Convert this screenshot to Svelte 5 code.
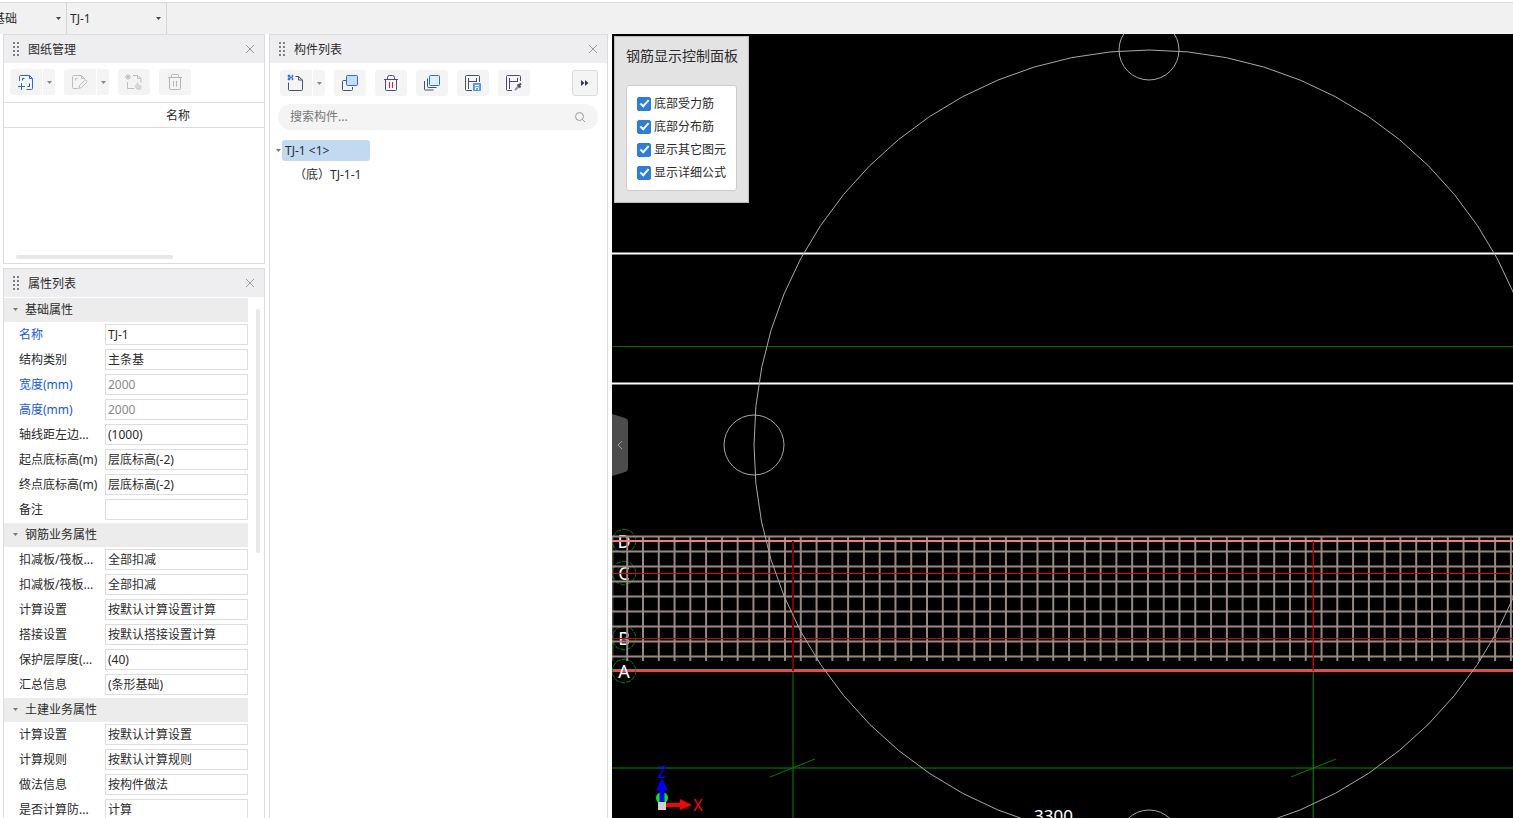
<script lang="ts">
  interface Prop {
    label: string;
    value: string;
    key?: boolean;
    readonly?: boolean;
  }

  interface Group {
    title: string;
    rows: Prop[];
  }

  const groups: Group[] = [
    {
      title: '基础属性',
      rows: [
        { label: '名称', value: 'TJ-1', key: true },
        { label: '结构类别', value: '主条基' },
        { label: '宽度(mm)', value: '2000', key: true, readonly: true },
        { label: '高度(mm)', value: '2000', key: true, readonly: true },
        { label: '轴线距左边...', value: '(1000)' },
        { label: '起点底标高(m)', value: '层底标高(-2)' },
        { label: '终点底标高(m)', value: '层底标高(-2)' },
        { label: '备注', value: '' },
      ],
    },
    {
      title: '钢筋业务属性',
      rows: [
        { label: '扣减板/筏板...', value: '全部扣减' },
        { label: '扣减板/筏板...', value: '全部扣减' },
        { label: '计算设置', value: '按默认计算设置计算' },
        { label: '搭接设置', value: '按默认搭接设置计算' },
        { label: '保护层厚度(...', value: '(40)' },
        { label: '汇总信息', value: '(条形基础)' },
      ],
    },
    {
      title: '土建业务属性',
      rows: [
        { label: '计算设置', value: '按默认计算设置' },
        { label: '计算规则', value: '按默认计算规则' },
        { label: '做法信息', value: '按构件做法' },
        { label: '是否计算防...', value: '计算' },
      ],
    },
  ];

  let layers = $state([
    { label: '底部受力筋', on: true },
    { label: '底部分布筋', on: true },
    { label: '显示其它图元', on: true },
    { label: '显示详细公式', on: true },
  ]);

  let keyword = $state('');

  function polygon(cx: number, cy: number, r: number, n: number) {
    return Array.from({ length: n }, (_, i) => {
      const a = (i / n) * Math.PI * 2;
      return `${(cx + r * Math.sin(a)).toFixed(1)},${(cy - r * Math.cos(a)).toFixed(1)}`;
    }).join(' ');
  }

  // Rebar mesh, in canvas coordinates
  const meshX = Array.from({ length: 160 }, (_, i) => (15.2 + i * 15.78).toFixed(2));
  const meshY = Array.from({ length: 9 }, (_, i) => 502.5 + i * 15);

  const orbit = polygon(537, 411, 395, 64);
  const knobs = [[537, 16], [142, 411], [932, 411], [537, 806]];
  const axes = [
    { name: 'D', y: 507 },
    { name: 'C', y: 539 },
    { name: 'B', y: 604 },
    { name: 'A', y: 637 },
  ];
</script>

{#snippet panelHead(title: string)}
  <header class="panel-head">
    <svg class="grip" width="8" height="14" viewBox="0 0 8 14" aria-hidden="true">
      {#each [0, 4, 8, 12] as y}
        <path d="M1 {y}h2v2h-2zM5 {y}h2v2h-2z" />
      {/each}
    </svg>
    <h2>{title}</h2>
    <button class="close" aria-label="关闭{title}">
      <svg width="10" height="10" viewBox="0 0 10 10"><path d="M1 1l8 8M9 1l-8 8" /></svg>
    </button>
  </header>
{/snippet}

{#snippet arrow()}
  <svg class="arrow" width="5" height="3" viewBox="0 0 5 3" aria-hidden="true"><path d="M0 0h5l-2.5 3z" /></svg>
{/snippet}

<div class="app">
  <nav class="topbar">
    <label class="pick first">
      <select aria-label="构件类型"><option>基础</option></select>
      {@render arrow()}
    </label>
    <label class="pick">
      <select aria-label="构件名称"><option>TJ-1</option></select>
      {@render arrow()}
    </label>
  </nav>

  <div class="workspace">
    <div class="side">
      <section class="panel drawings">
        {@render panelHead('图纸管理')}
        <div class="tools">
          <div class="split">
            <button class="tool" aria-label="添加图纸">
              <svg width="18" height="18" viewBox="0 0 18 18" stroke="#1f6fe0">
                <path d="M2.5 8V3.500q0-1 1-1h9l3 3v10q0 1-1 1H9.500M12.500 2.500v3h3M1 13.500h7M4.500 10v7" />
                <path d="M5.500 7.500v-2h2M12.500 10.500v3h-2" stroke="#46506a" />
              </svg>
            </button>
            <button class="drop" aria-label="添加图纸选项">{@render arrow()}</button>
          </div>
          <div class="split">
            <button class="tool" aria-label="编辑图纸">
              <svg width="18" height="18" viewBox="0 0 18 18" stroke="#bdbdbd">
                <path d="M7 15.500H2.500q-1 0-1-1v-11q0-1 1-1h8l3 3v1M10.500 2.500v3h3M4.500 7.500v-2h2" />
                <path d="M8 15.500l.5-3 5-5q1-1 2 0t0 2l-5 5z" />
              </svg>
            </button>
            <button class="drop" aria-label="编辑图纸选项">{@render arrow()}</button>
          </div>
          <button class="tool" aria-label="提取图纸">
            <svg width="18" height="18" viewBox="0 0 18 18" stroke="#bdbdbd">
              <path d="M1 2l4 4M5 2L1 6M3 1v6M0 4h6M2.500 9v6.500h7M8 2.500h5l3 3v4M12.500 2.500v3h3" />
              <path d="M12 16l-2-3 1-.5 1 .5V10h1v2l3 1v2l-1 1.500z" fill="#d8d8d8" stroke="#d0d0d0" />
            </svg>
          </button>
          <button class="tool" aria-label="删除图纸">
            <svg width="18" height="18" viewBox="0 0 18 18" stroke="#b4b4b4">
              <path d="M2 4.500h14M5.500 4.500v-2q0-1 1-1h5q1 0 1 1v2M3.500 4.500v11q0 1 1 1h9q1 0 1-1v-11M7.500 8v5.500M10.500 8v5.500" />
            </svg>
          </button>
        </div>
        <div class="sheet">
          <table>
            <thead><tr><th>名称</th></tr></thead>
          </table>
        </div>
        <div class="hbar"></div>
      </section>

      <section class="panel props">
        {@render panelHead('属性列表')}
        <div class="props-body">
          <table>
            <colgroup>
              <col class="col-name" />
              <col />
            </colgroup>
            {#each groups as group, g}
              <tbody>
                <tr>
                  <th class="group" colspan="2">
                    <div>{@render arrow()}{group.title}</div>
                  </th>
                </tr>
                {#each group.rows as row, i}
                  <tr>
                    <td class="name" class:key={row.key}><label for="p{g}-{i}">{row.label}</label></td>
                    <td><input id="p{g}-{i}" type="text" value={row.value} readonly={row.readonly} /></td>
                  </tr>
                {/each}
              </tbody>
            {/each}
          </table>
          <div class="vbar"></div>
        </div>
      </section>
    </div>

    <section class="panel members">
      {@render panelHead('构件列表')}
      <div class="tools dark">
        <div class="split">
          <button class="tool" aria-label="新建">
            <svg width="18" height="18" viewBox="0 0 18 18">
              <path d="M1 1h2v2H1zM5 1h1v2H5zM3 3h2v1H3zM1 4h2v2H1zM5 4h1v2H5z" fill="#2478e8" stroke="#2478e8" stroke-width=".5" />
              <path d="M1.500 8.500v7q0 1 1 1h12q1 0 1-1V6l-4-3.500H8.500M11.500 2.500V6h4" />
            </svg>
          </button>
          <button class="drop" aria-label="新建选项">{@render arrow()}</button>
        </div>
        <button class="tool" aria-label="复制">
          <svg width="18" height="18" viewBox="0 0 18 18">
            <path d="M5 6.500H2.500q-1 0-1 1v8q0 1 1 1h8q1 0 1-1V13" />
            <rect x="5.500" y="1.500" width="11" height="10" rx="1" fill="#c9dcf7" stroke="#1f6fe0" />
          </svg>
        </button>
        <button class="tool" aria-label="删除">
          <svg width="18" height="18" viewBox="0 0 18 18">
            <path d="M2 5.500h14M5.500 5.500v-2q0-2 2-2h3q2 0 2 2v2M3.500 5.500v10q0 1 1 1h9q1 0 1-1v-10" />
            <path d="M7.500 8v6M10.500 8v6" stroke="#e0202c" />
          </svg>
        </button>
        <button class="tool" aria-label="层间复制">
          <svg width="18" height="18" viewBox="0 0 18 18">
            <path d="M1.500 7v8q0 1 1 1h8M4.500 4.500v8q0 1 1 1h8" />
            <rect x="6.500" y="1.500" width="10" height="10" rx="1" fill="#e3effd" stroke="#1f6fe0" />
          </svg>
        </button>
        <button class="tool" aria-label="存档">
          <svg width="18" height="18" viewBox="0 0 18 18">
            <path d="M8 16.500H2.500q-1 0-1-1v-13q0-1 1-1h12q1 0 1 1V8M4.500 15V4M4.500 7.500h8M12.500 4v4" />
            <path d="M9.500 9.500h7v7h-7z" fill="#5fa3f5" stroke="#4a94f0" />
            <path d="M11.500 16v-2.500h3V16M11 11.500h4" stroke="#fff" />
          </svg>
        </button>
        <button class="tool" aria-label="提取">
          <svg width="18" height="18" viewBox="0 0 18 18">
            <path d="M7 16.500H2.500q-1 0-1-1v-13q0-1 1-1h12q1 0 1 1V7M4.500 15V4M4.500 7.500h8M12.500 4v4" />
            <path d="M10 16l4-4" stroke="#8a90a0" stroke-width="2" />
            <path d="M12.500 10.500l3 3M14 11.500l2-2" stroke-width="2" />
          </svg>
        </button>
        <button class="more" aria-label="更多">
          <svg width="8" height="6" viewBox="0 0 8 6"><path d="M0 0l3.500 3L0 6zM4 0l3.500 3L4 6z" fill="#333c50" stroke="none" /></svg>
        </button>
      </div>
      <div class="search">
        <input type="text" placeholder="搜索构件..." aria-label="搜索构件" bind:value={keyword} />
        <svg width="12" height="12" viewBox="0 0 12 12" aria-hidden="true"><circle cx="5.500" cy="5.500" r="4" /><path d="M8.500 8.500l2.500 2.500" /></svg>
      </div>
      <ul class="tree">
        <li>
          <div class="node">{@render arrow()}<span class="picked">TJ-1 &lt;1&gt;</span></div>
          <ul>
            <li>（底）TJ-1-1</li>
          </ul>
        </li>
      </ul>
    </section>

    <main class="canvas">
      <svg class="scene" aria-label="钢筋三维视图">
        <g shape-rendering="crispEdges" fill="none">
          <path d="M0 219.500H2500M0 349.500H2500" stroke="#808080" stroke-width="3" />
          <path d="M0 219.500H2500M0 349.500H2500" stroke="#fff" />
          <path d="M0 312.500H2500" stroke="#007000" />
          <path d="M0 636.500H2500" stroke="#907070" stroke-width="3" />
          <path d="M0 637H2500" stroke="#ff4040" stroke-width="2" />
          <path d="M181 638V2000" stroke="#004400" stroke-width="2" />
          <path d="M0 734H2500" stroke="#004800" stroke-width="2" />
        </g>
        <path d="M701.300 638V2000" stroke="#006c00" stroke-width="1.400" />
        <path d="M158 743l45-18M679 743l45-18" stroke="#008000" />

        {#each axes as axis}
          <polygon points={polygon(12, axis.y, 12, 10)} fill="none" stroke="#008000" stroke-dasharray="5 1" />
          <text x="12" y={axis.y + 7} class="axis-name">{axis.name}</text>
        {/each}

        <g class="mesh">
          <path d="M0.500 502V627" opacity=".5" />
          {#each meshX as x}
            <path d="M{x} 502V627" />
          {/each}
          {#each meshY as y}
            <path d="M0 {y}H2500" />
          {/each}
        </g>

        <g shape-rendering="crispEdges" fill="none">
          <path d="M0 507H2500" stroke="#ff7878" stroke-width="2" />
          <path d="M0 539.500H2500" stroke="#f00000" />
          <path d="M0 604.500H2500" stroke="#c80000" />
          <path d="M181 507V637" stroke="#800000" stroke-width="2" />
        </g>
        <path d="M701.300 507V637" stroke="#d00000" stroke-width="1.400" />

        <g fill="none" stroke="#a8a8a8">
          <polygon points={orbit} />
          {#each knobs as [x, y]}
            <polygon points={polygon(x, y, 30, 32)} />
          {/each}
        </g>
        <text x="422" y="788" class="dim">3300</text>

        <!-- coordinate gizmo -->
        <circle cx="50" cy="764" r="6" fill="#00f000" />
        <path d="M48 768V756h-3l5-11 5 11h-3v12z" fill="#00f" stroke="#00f" />
        <path d="M54 769h14v-4l12 6-12 5v-3H54z" fill="#f00" />
        <rect x="46" y="768" width="8" height="8" fill="#d0d0d0" />
        <text x="50" y="744" class="gizmo z">Z</text>
        <text x="86" y="777" class="gizmo x">X</text>
      </svg>

      <form class="layers">
        <h3>钢筋显示控制面板</h3>
        <div class="checks">
          {#each layers as layer}
            <label><input type="checkbox" bind:checked={layer.on} />{layer.label}</label>
          {/each}
        </div>
      </form>

      <button class="fold" aria-label="收起">
        <svg width="16" height="62" viewBox="0 0 16 62">
          <path d="M0 0l13 4q3 1 3 4v46q0 3-3 4L0 62z" fill="#4c4c4c" />
          <path d="M10 27l-4 4 4 4" fill="none" stroke="#a0a0a0" />
        </svg>
      </button>
    </main>
  </div>
</div>

<style>
  :global(body) {
    background: #fff;
  }

  .app {
    height: 100vh;
    display: flex;
    flex-direction: column;
    overflow: hidden;
    font: 12px/16px "Noto Sans", "Noto Sans CJK SC", sans-serif;
    color: #2b2b2b;
  }

  button,
  input,
  select {
    font: inherit;
    color: inherit;
    margin: 0;
    padding: 0;
    border: 0;
    outline: 0;
    background: none;
    box-sizing: border-box;
  }

  svg {
    display: block;
    flex: none;
  }

  h2,
  h3 {
    margin: 0;
    font: inherit;
  }

  ul {
    list-style: none;
    margin: 0;
    padding: 0;
  }

  table {
    border-collapse: collapse;
    table-layout: fixed;
  }

  .arrow {
    fill: #777;
  }

  /* Top bar */
  .topbar {
    display: flex;
    flex: none;
    height: 31px;
    margin-top: 2px;
    border-top: 1px solid #dadada;
    background: #f1f1f1;
  }

  .pick {
    display: flex;
    align-items: center;
    width: 100px;
    padding-right: 5px;
    box-sizing: border-box;
    height: 31px;
    border-right: 1px solid #d4d4d4;
  }

  .pick.first {
    width: 77px;
    margin-left: -10px;
  }

  .pick select {
    appearance: none;
    flex: 1;
    min-width: 0;
    padding-left: 3px;
  }

  .pick .arrow {
    fill: #444;
  }

  /* Panels */
  .workspace {
    display: flex;
    flex: 1;
    min-height: 0;
  }

  .side {
    display: flex;
    flex-direction: column;
    flex: none;
    width: 262px;
    margin: 0 4px 0 3px;
    gap: 4px;
  }

  .panel {
    display: flex;
    flex-direction: column;
    border: 1px solid #dcdcdc;
    box-sizing: border-box;
    background: #fff;
  }

  .panel-head {
    display: flex;
    align-items: center;
    flex: none;
    height: 28px;
    padding: 0 9px 0 8px;
    background: #eeeef1;
  }

  .panel-head h2 {
    flex: 1;
    margin-left: 8px;
    padding-top: 2px;
  }

  .grip {
    fill: #808080;
  }

  .close svg {
    stroke: #9a9a9a;
  }

  .tools {
    display: flex;
    flex: none;
    gap: 9px;
    padding: 6px 6px 7px;
  }

  .tools svg {
    fill: none;
  }

  .tools svg.arrow {
    fill: #888;
  }

  .tools.dark {
    padding: 7px 9px 8px 10px;
  }

  .tools.dark svg {
    stroke: #46506a;
  }

  .tools.dark svg.arrow {
    stroke: none;
  }

  .split {
    display: flex;
    gap: 1px;
  }

  .tool,
  .drop,
  .more {
    display: flex;
    align-items: center;
    justify-content: center;
    height: 26px;
    background: #f4f4f4;
    border-radius: 3px;
  }

  .tool {
    width: 32px;
  }

  .drop {
    width: 12px;
  }

  .split .tool {
    border-radius: 3px 0 0 3px;
  }

  .split .drop {
    border-radius: 0 3px 3px 0;
  }

  .more {
    width: 26px;
    margin-left: auto;
    border: 1px solid #dcdcdc;
  }

  .drawings {
    height: 230px;
    flex: none;
  }

  .sheet {
    flex: 1;
    overflow: hidden;
  }

  .sheet table {
    width: 348px;
  }

  .sheet th {
    height: 22px;
    padding: 2px 0 0;
    font-weight: normal;
    border-top: 1px solid #dcdcdc;
    border-bottom: 1px solid #dcdcdc;
  }

  .hbar {
    width: 157px;
    height: 4px;
    margin: 0 0 4px 12px;
    border-radius: 2px;
    background: #e8e8e8;
  }

  .props {
    flex: 1;
    min-height: 0;
    overflow: hidden;
    border-bottom: 0;
  }

  .props-body {
    display: flex;
    gap: 8px;
  }

  .props table {
    flex: none;
    width: 244px;
  }

  .col-name {
    width: 101px;
  }

  .props th,
  .props td {
    height: 25px;
    padding: 0;
    text-align: left;
    font-weight: normal;
  }

  .group div {
    display: flex;
    align-items: center;
    gap: 7px;
    height: 24px;
    padding-left: 9px;
    background: #ececec;
  }

  .props .name {
    padding-left: 15px;
    white-space: nowrap;
  }

  .props .key {
    color: #1258f0;
  }

  .props td input {
    display: block;
    width: 100%;
    height: 21px;
    padding: 0 2px 1px;
    border: 1px solid #dedede;
  }

  .props td input:read-only {
    color: #8a8a8a;
  }

  .vbar {
    width: 4px;
    height: 244px;
    margin-top: 12px;
    border-radius: 2px;
    background: #e8e8e8;
  }

  .members {
    flex: none;
    width: 339px;
    margin-right: 4px;
    border-bottom: 0;
  }

  .search {
    display: flex;
    align-items: center;
    height: 26px;
    margin: 0 9px 0 8px;
    padding: 0 12px;
    border-radius: 13px;
    background: #f4f4f4;
  }

  .search input {
    flex: 1;
    min-width: 0;
  }

  .search input::placeholder {
    color: #777;
  }

  .search svg {
    fill: none;
    stroke: #999;
  }

  .tree {
    margin: 9px 0 0 6px;
    line-height: 22px;
  }

  .node {
    display: flex;
    align-items: center;
    gap: 1px;
    height: 22px;
  }

  .picked {
    width: 88px;
    padding-left: 3px;
    box-sizing: border-box;
    border-radius: 3px;
    line-height: 21px;
    background: #c2d9f2;
  }

  .tree ul {
    margin: 3px 0 0 18px;
  }

  /* Drawing area */
  .canvas {
    position: relative;
    flex: 1;
    min-width: 0;
    overflow: hidden;
    background: #000;
  }

  .scene {
    position: absolute;
    width: 100%;
    height: 100%;
  }

  .mesh {
    stroke: #988880;
    stroke-width: 2;
  }

  .axis-name {
    fill: #fff;
    font-size: 18px;
    text-anchor: middle;
  }

  .dim {
    fill: #fff;
    font-size: 17px;
  }

  .gizmo {
    font-size: 16px;
    text-anchor: middle;
  }

  .gizmo.z {
    fill: #00f;
  }

  .gizmo.x {
    fill: #f00;
  }

  .layers {
    position: absolute;
    left: 2px;
    top: 2px;
    padding: 9px 10px 11px 11px;
    border: 1px solid #bcbcbc;
    background: #e3e3e3;
  }

  .layers h3 {
    margin-bottom: 20px;
    font-size: 14px;
    line-height: 19px;
  }

  .checks {
    display: flex;
    flex-direction: column;
    gap: 7px;
    width: 99px;
    padding: 10px 0 9px 10px;
    border: 1px solid #ccc;
    border-radius: 3px;
    background: #fff;
    white-space: nowrap;
  }

  .checks label {
    display: flex;
    align-items: center;
    gap: 3px;
  }

  .checks input {
    position: relative;
    appearance: none;
    width: 14px;
    height: 14px;
    border: 1px solid #2b7de1;
    border-radius: 2px;
  }

  .checks input:checked {
    background: #2b7de1;
  }

  .checks input:checked::after {
    content: "";
    position: absolute;
    left: 4px;
    top: 0;
    width: 3px;
    height: 7px;
    border: solid #fff;
    border-width: 0 2px 2px 0;
    transform: rotate(42deg);
  }

  .fold {
    position: absolute;
    left: 0;
    top: 380px;
  }
</style>
